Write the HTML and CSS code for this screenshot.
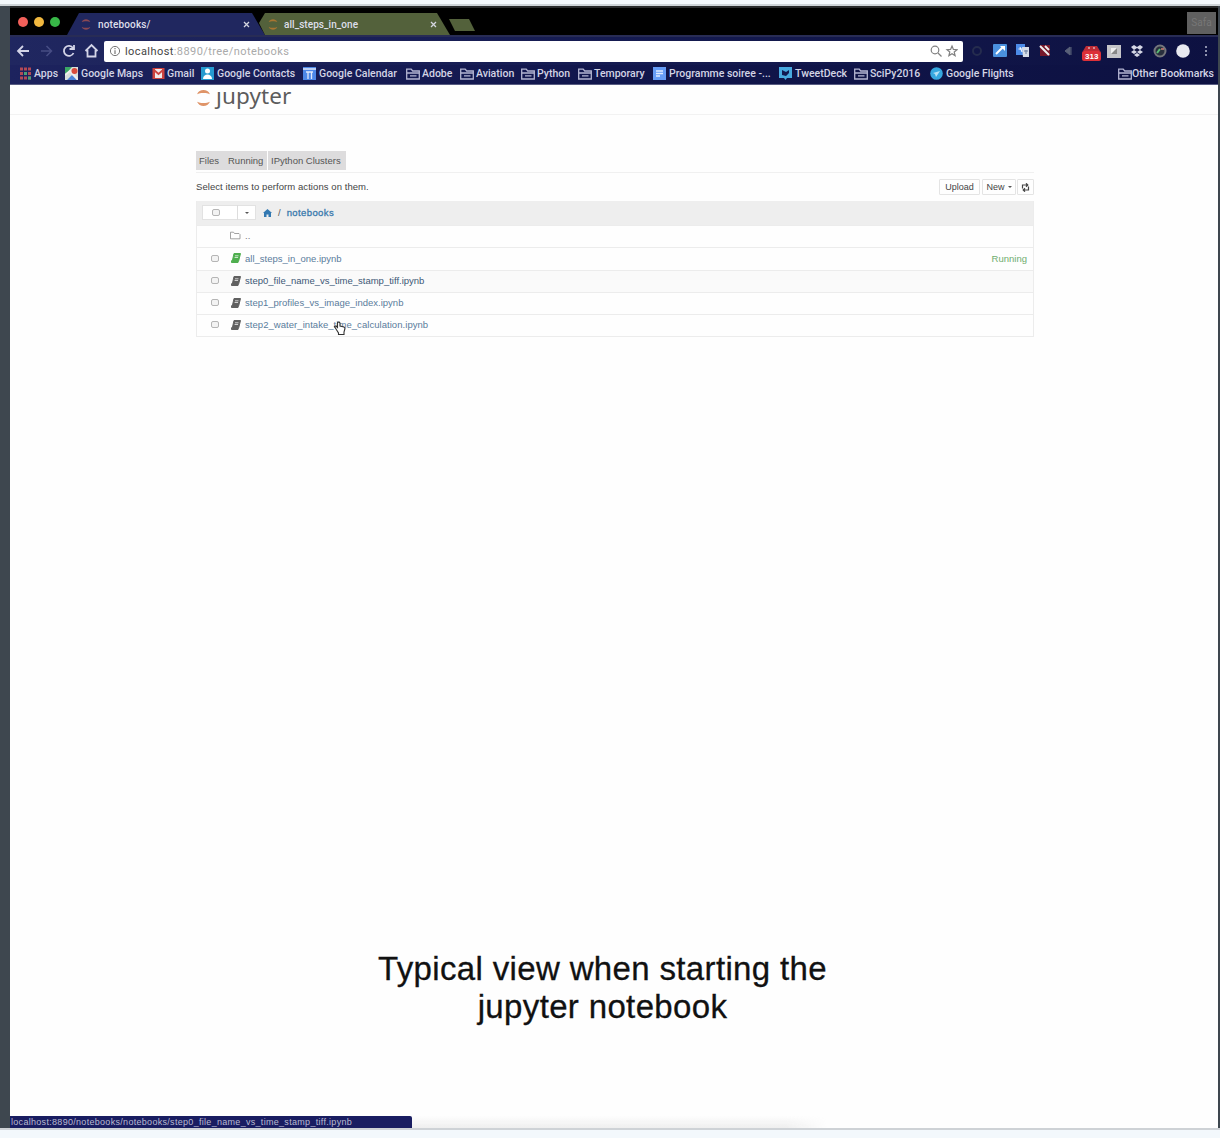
FILE: index.html
```html
<!DOCTYPE html>
<html lang="en">
<head>
<meta charset="utf-8">
<title>notebooks/</title>
<link rel="stylesheet" href="styles.css">
</head>
<body>
<svg class="defs" width="0" height="0" aria-hidden="true">
  <symbol id="folder" viewBox="0 0 14 12"><path d="M.7 11V1.200h4.500l1.500 1.800h6.600v8zM.7 5h12.600M4 7.900h6.500" fill="none" stroke="#b4b5d2" stroke-width="1.300"/></symbol>
  <symbol id="jup" viewBox="0 0 14 18"><path d="M1 5.500C3 .3 11 .3 13 5.500 10 3.900 4 3.900 1 5.500zM1 12.500C3 17.700 11 17.700 13 12.500 10 14.100 4 14.100 1 12.500z"/></symbol>
  <symbol id="book" viewBox="0 0 10 10"><path d="M3 .5h6.500L7.500 8.500H1.200zM.5 7.500v2h6.800" fill="currentColor" stroke="currentColor"/><path d="M4 2.800h3.500M3.600 4.500h3.500" stroke="#fff" stroke-width=".7"/></symbol>
</svg>
<div class="frame">
  <div class="browser">
    <div class="tabstrip">
      <div class="lights"><i class="red"></i><i class="yellow"></i><i class="green"></i></div>
      <div class="tab active"><svg class="fav" fill="#8b4853"><use href="#jup"/></svg><span class="tabname">notebooks/</span><svg class="x" viewBox="0 0 7 7"><path d="M1 1l5 5M6 1L1 6"/></svg></div>
      <div class="tab other"><svg class="fav" fill="#a87531"><use href="#jup"/></svg><span class="tabname">all_steps_in_one</span><svg class="x" viewBox="0 0 7 7"><path d="M1 1l5 5M6 1L1 6"/></svg></div>
      <div class="newtab"></div>
      <div class="profile">Safa</div>
    </div>
    <div class="toolbar">
      <svg class="nav" width="86" height="20" viewBox="0 0 86 20" fill="none" stroke="#d3d4e7" stroke-width="1.8">
        <path d="M19 10H8M13 5l-5 5 5 5"/>
        <path d="M31 10h10M36.500 5l5 5-5 5" stroke="#474d84" stroke-width="1.500"/>
        <path d="M63 7a5 5 0 1 0 .5 5M64 4v4h-4.500"/>
        <path d="M75.500 10l6-6 6 6M77.500 9v6.500h8V9"/>
      </svg>
      <div class="address">
        <svg width="12" height="12" viewBox="0 0 12 12"><circle cx="6" cy="6" r="4.600" fill="none" stroke="#777"/><path d="M6 5.200V9M6 3v1.200" stroke="#777" stroke-width="1.200"/></svg>
        <span class="url">localhost<em>:8890/tree/notebooks</em></span>
        <svg class="addr-icons" width="29" height="14" viewBox="0 0 29 14" fill="none" stroke="#818181" stroke-width="1.200"><circle cx="6" cy="6" r="3.800"/><path d="M9 9l3.500 3.500M23 2l1.400 3.400 3.600.3-2.800 2.300.9 3.600-3.100-1.900-3.100 1.900.9-3.600L18 5.700l3.600-.3z"/></svg>
      </div>
      <svg class="ext" width="250" height="24" viewBox="965 39 250 24">
        <circle cx="977" cy="51" r="4" fill="none" stroke="#252c4e" stroke-width="2"/>
        <rect x="993" y="44" width="14" height="13" rx="1" fill="#4a91df"/><path d="M996 54l7-7" stroke="#fff" stroke-width="2"/><path d="M1000 46h5v5z" fill="#fff"/>
        <rect x="1016" y="44" width="9" height="11" fill="#4c8be8"/><path d="M1022 47h7v10h-6z" fill="#d6dce8"/><path d="M1018.500 49h4M1020 47l2 5" stroke="#fff"/><path d="M1024 51h4M1026 50v4" stroke="#667a9c"/>
        <rect x="1040" y="45" width="10" height="11" fill="#76182a"/><path d="M1040 46l9 9M1045 46l4 4" stroke="#eee" stroke-width="2"/>
        <path d="M1065 51l5-4v8zM1071 47v8" fill="#596078" stroke="#596078"/>
        <path d="M1083 51l3-5h11l3 5z" fill="#bd2b35"/><path d="M1088 48h2M1093 48h2" stroke="#eee"/><rect x="1082" y="51" width="19" height="10" rx="2" fill="#dc3038"/>
        <text x="1085" y="59" font-size="8" fill="#fff" font-weight="bold">313</text>
        <rect x="1107" y="45" width="14" height="13" fill="#c5c5c9"/><path d="M1111 48h6v6h-6z" fill="#eee"/><path d="M1111 54l6-6v6z" fill="#888"/>
        <path d="M1131 47l3-2 3 2 3-2 3 2-3 3 3 2-3 2-3-2-3 2-3-2 3-2zM1134 55l3-2 3 2-3 2z" fill="#d6d8e6"/><path d="M1134 50l3-2 3 2-3 2z" fill="#111642"/>
        <circle cx="1160" cy="51" r="5.500" fill="#282f3d" stroke="#74767c" stroke-width="2"/><path d="M1157 53l3-4" stroke="#58b975" stroke-width="2"/><path d="M1161 49h3" stroke="#d17d75" stroke-width="1.500"/>
        <circle cx="1183" cy="51" r="6.800" fill="#e9eaf0"/>
        <path d="M1206 46v2M1206 50v2M1206 54v2" stroke="#8d91ad" stroke-width="2"/>
      </svg>
    </div>
    <div class="bookmarks">
      <div class="apps"><svg viewBox="0 0 13 13"><path d="M1 2h11M1 6.500h11M1 11h11" stroke="#b44955" stroke-width="3" stroke-dasharray="3 1"/><path d="M5 6.500h3M9 11h3" stroke="#4ba077" stroke-width="3"/></svg>Apps</div>
      <div><svg viewBox="0 0 13 13"><rect width="13" height="13" fill="#d9dfdc"/><path d="M0 0h7L0 8z" fill="#3ba765"/><path d="M2 13l5-5 6 5z" fill="#4b83d8"/><path d="M0 8l5-4 8 9" fill="none" stroke="#eee" stroke-width="2"/><circle cx="9.500" cy="4" r="3" fill="#d84b3b"/></svg>Google Maps</div>
      <div class="narrow"><svg viewBox="0 0 13 13"><rect x=".5" y="1" width="12" height="11" fill="#cd4440"/><path d="M3 2h7v9H3z" fill="#f1eaea"/><path d="M2 3l4.500 4L11 3" fill="none" stroke="#cd4440" stroke-width="1.800"/></svg>Gmail</div>
      <div><svg viewBox="0 0 13 13"><rect width="13" height="13" fill="#269bd0"/><circle cx="6.500" cy="4" r="2.500" fill="#fff"/><path d="M2 12c0-6 9-6 9 0z" fill="#fff"/></svg>Google Contacts</div>
      <div><svg viewBox="0 0 13 13"><rect width="13" height="13" fill="#4d88e8"/><path d="M0 2h13M3 5h7M5 5v7M8.500 5v7" stroke="#dfe8fa" stroke-width="1.300"/></svg>Google Calendar</div>
      <div class="dir"><svg><use href="#folder"/></svg>Adobe</div>
      <div class="dir"><svg><use href="#folder"/></svg>Aviation</div>
      <div class="dir"><svg><use href="#folder"/></svg>Python</div>
      <div class="dir"><svg><use href="#folder"/></svg>Temporary</div>
      <div><svg viewBox="0 0 13 13"><rect width="13" height="13" fill="#669df6"/><path d="M3 4h7M3 6.500h7M3 9h4" stroke="#e0ebff" stroke-width="1.300"/></svg>Programme soiree -...</div>
      <div><svg viewBox="0 0 13 13"><path d="M0 0h13v11H8l-1.500 2L5 11H0z" fill="#48a9df"/><path d="M3 3l4 2 3-2v3L7 9 3 8z" fill="#111951"/></svg>TweetDeck</div>
      <div class="dir"><svg><use href="#folder"/></svg>SciPy2016</div>
      <div><svg viewBox="0 0 13 13"><circle cx="6.500" cy="6.500" r="6.300" fill="#36a7df"/><path d="M3 6l7-2-4 6-1-3z" fill="#b6e1f5"/></svg>Google Flights</div>
      <div class="dir last"><svg><use href="#folder"/></svg>Other Bookmarks</div>
    </div>
    <header class="jheader"><svg class="logo" viewBox="0 0 14 18" fill="#df9468"><use href="#jup"/></svg><span class="wordmark"><span class="jay">j</span>upyter</span></header>
    <main class="page">
      <nav class="tabs"><span class="t1">Files</span><span class="t2">Running</span><span class="t3">IPython Clusters</span></nav>
      <div class="actions">
        <span class="hint">Select items to perform actions on them.</span>
        <span class="btn upload">Upload</span><span class="btn new">New <b class="caret"></b></span>
        <span class="btn refresh"><svg width="9" height="9" viewBox="0 0 9 9" fill="none" stroke="#444" stroke-width="1.200"><path d="M1.500 5.500V2H6M7.500 3.500V7H3M5 .3L6.800 2 5 3.700M4 5.300L2.200 7 4 8.700"/></svg></span>
      </div>
      <section class="list">
        <div class="row head"><span class="select"><i class="check"></i><span class="drop"><b class="caret"></b></span></span><svg class="home" width="9" height="8" viewBox="0 0 9 8"><path d="M0 4l4.500-4L9 4H8v4H5.500V5.500h-2V8H1V4z" fill="#3379b2"/></svg><span class="slash">/</span><span class="crumb">notebooks</span></div>
        <div class="row up"><svg class="fold" width="11" height="9" viewBox="0 0 11 9"><path d="M.5 7.800V1.200h3l1 1.300h4.500l1 1v4.300z" fill="none" stroke="#8b8b8b" stroke-width=".8"/></svg><span class="name">..</span></div>
        <div class="row r1"><i class="check"></i><svg class="nb run"><use href="#book"/></svg><span class="name n1">all_steps_in_one.ipynb</span><span class="status">Running</span></div>
        <div class="row r2"><i class="check"></i><svg class="nb"><use href="#book"/></svg><span class="name n2">step0_file_name_vs_time_stamp_tiff.ipynb</span></div>
        <div class="row r3"><i class="check"></i><svg class="nb"><use href="#book"/></svg><span class="name n3">step1_profiles_vs_image_index.ipynb</span></div>
        <div class="row r4"><i class="check"></i><svg class="nb"><use href="#book"/></svg><span class="name n4">step2_water_intake_time_calculation.ipynb</span>
          <svg class="pointer" width="13" height="15" viewBox="0 0 13 15"><path d="M3 8L1.500 5.500 3 5l1.500 1.500V1.500L6 1l1 1v3l4 1 1 1.500-1 3.500v2.500H5.500V12z" fill="#fff" stroke="#333" stroke-width="1.100"/></svg></div>
      </section>
    </main>
    <p class="caption">Typical view when starting the<br>jupyter notebook</p>
    <footer class="bottom"><div class="statusbar">localhost:8890/notebooks/notebooks/step0_file_name_vs_time_stamp_tiff.ipynb</div><div class="shade"></div></footer>
  </div>
</div>
</body>
</html>
```
FILE: styles.css
```css
* { box-sizing: border-box; }
body { margin: 0; padding-top: 4px; height: 1138px; overflow: hidden; background: #f3f8fc; font-family: "Liberation Sans", sans-serif; }
.defs { position: absolute; }
.frame { height: 1126px; border-top: 2px solid #ced4d8; border-bottom: 2px solid #ced2d6; padding: 0 2px 0 10px; background: #3e474f; }
.browser { height: 100%; background: #fefefe; display: flex; flex-direction: column; }
i { font-style: normal; }
.tabstrip { height: 29px; flex: none; background: #000; border-top: 2px solid #292b2c; display: flex; align-items: flex-end; }
.lights { width: 57px; display: flex; gap: 6px; padding: 0 0 8px 8px; }
.lights i { width: 10px; height: 10px; border-radius: 50%; }
.red { background: #f2605a; }
.yellow { background: #f1b83f; }
.green { background: #38b848; }
.tab { height: 22px; flex: none; display: flex; align-items: center; color: #dedfea; font: 500 10px Roboto, sans-serif; }
.active { width: 198px; padding-left: 14px; background: #20275f; clip-path: polygon(12px 0, 185px 0, 198px 100%, 0 100%); }
.other { width: 191px; margin-left: -6px; padding-left: 9px; background: #53613b; clip-path: polygon(6px 0, 178px 0, 191px 100%, 6px 100%, 0 10px); }
.fav { width: 10px; height: 15px; margin-right: 7px; }
.other .fav { margin-right: 6px; }
.active .tabname { width: 145px; letter-spacing: .15px; }
.other .tabname { width: 146px; letter-spacing: .05px; }
.x { width: 7px; height: 7px; stroke: #d4d5e0; stroke-width: 1.300; fill: none; }
.newtab { width: 26px; height: 12px; margin: 0 0 4px -1px; background: #53613b; clip-path: polygon(0 0, 20px 0, 100% 100%, 6px 100%); }
.profile { width: 29px; height: 22px; margin: 0 2px 1px auto; background: #606060; color: #777; font: 10px/22px Roboto, sans-serif; text-align: center; }
.toolbar { height: 30px; flex: none; background: linear-gradient(90deg, #202760, #151b51 50%, #0d1141); display: flex; align-items: center; border-top: 2px solid #282c55; }
.nav { overflow: visible; flex: none; margin-right: 8px; }
.address { width: 859px; height: 21px; background: #fff; border-radius: 2px; display: flex; align-items: center; padding: 0 5px; font: 11px Roboto, sans-serif; color: #444; }
.url { margin-left: 4px; letter-spacing: .42px; }
.url em { font-style: normal; color: #aaa; }
.addr-icons { margin-left: auto; }
.ext { margin-left: 2px; font-family: "Liberation Sans", sans-serif; }
.bookmarks { height: 20px; flex: none; background: linear-gradient(90deg, #1d235e, #11164c 50%, #0d1141); border-bottom: 1px solid #585c82; padding: 0 4px 2px 9px; display: grid; grid-template-columns: 46px 87px 49px 102px 103px 54px 61px 57px 75px 126px 75px 76px 90px 1fr; align-items: center; font: 500 10.500px Roboto, sans-serif; color: #d3d4e5; white-space: nowrap; }
.bookmarks div { display: flex; align-items: center; gap: 3px; }
.bookmarks svg { width: 13px; height: 13px; flex: none; }
.bookmarks .dir svg { width: 14px; height: 12px; }
.bookmarks .dir { gap: 2px; }
.bookmarks .apps, .bookmarks .narrow { gap: 2px; }
.bookmarks .last { justify-content: flex-end; gap: 0; }
.jheader { height: 30px; flex: none; border-bottom: 1px solid #f2f2f2; padding-left: 185px; display: flex; align-items: flex-start; }
.logo { width: 15px; height: 20px; margin: 3px 5px 0 1px; }
.wordmark { font: 22.500px/26px "Noto Sans", sans-serif; color: #5c5c5c; display: flex; letter-spacing: .1px; margin-top: -2px; }
.jay { clip-path: inset(9px -5px -5px -5px); }
.page { width: 838px; margin-left: 186px; padding-top: 36px; height: 794px; flex: none; color: #444; font-size: 9.500px; }
.tabs { display: flex; height: 22px; border-bottom: 1px solid #f0f0f0; line-height: 20px; }
.tabs span { background: #dddcdd; padding-left: 3px; height: 19px; color: #555; }
.t1 { width: 28px; }
.tabs .t2 { width: 43px; padding-left: 4px; }
.tabs .t3 { width: 78px; margin-left: 1px; }
.actions { height: 28px; display: flex; align-items: center; }
.hint { margin-right: auto; margin-top: -2px; letter-spacing: .07px; }
.btn { height: 16px; border: 1px solid #e4e4e4; border-radius: 1px; display: flex; align-items: center; justify-content: center; gap: 3px; font-size: 9px; }
.upload { width: 41px; }
.new { width: 34px; margin-left: 2px; }
.refresh { width: 17px; margin-left: 1px; }
.caret { border: 2px solid transparent; border-top-color: #555; margin-top: 2px; }
.list { border: 1px solid #ececec; border-top: 0; }
.row { display: flex; align-items: center; height: 22px; border-top: 1px solid #ececec; padding-left: 14px; color: #5a7c9c; position: relative; }
.head { height: 24px; border: 0; background: #eee; padding: 0 0 1px 5px; }
.up, .r1, .r2, .r3, .r4 { padding-bottom: 2px; }
.row.r1 { height: 23px; }
.select { width: 54px; height: 15px; border: 1px solid #e2e2e2; background: #fff; display: flex; align-items: center; padding-left: 9px; }
.drop { margin-left: auto; width: 18px; height: 15px; border-left: 1px solid #ddd; display: flex; align-items: center; justify-content: center; }
.check { width: 8px; height: 7px; border: 1px solid #b5b5b5; border-radius: 2px; background: #f3f3f3; }
.home { margin-left: 7px; }
.slash { margin: 0 6px; color: #555; }
.crumb { color: #3979ad; letter-spacing: .4px; -webkit-text-stroke: .3px #3979ad; }
.row.up { padding-left: 33px; color: #777; }
.fold { margin-right: 4px; }
.nb { width: 10px; height: 10px; color: #606060; margin: 0 4px 0 12px; }
.run { color: #4fae4f; }
.r2 { background: #fafafa; color: #3c5876; }
.n4 { letter-spacing: .05px; }
.status { margin-left: auto; margin-right: 6px; color: #6fad6f; }
.pointer { position: absolute; left: 136px; top: 6px; }
.caption { margin: 41px 33px 0 10px; text-align: center; color: #111; font-size: 33px; line-height: 38px; height: 80px; flex: none; white-space: nowrap; letter-spacing: .35px; -webkit-text-stroke: .3px #111; }
.bottom { margin-top: auto; display: flex; align-items: flex-end; }
.statusbar { width: 402px; height: 12px; background: #191d61; color: #b9bbd2; font: 9px/13px "Liberation Sans", sans-serif; letter-spacing: .3px; padding-left: 1px; white-space: nowrap; overflow: hidden; border-radius: 0 2px 0 0; }
.shade { width: 415px; height: 12px; background: linear-gradient(transparent, #eee); mask-image: linear-gradient(90deg, #000 90%, transparent); }
```
